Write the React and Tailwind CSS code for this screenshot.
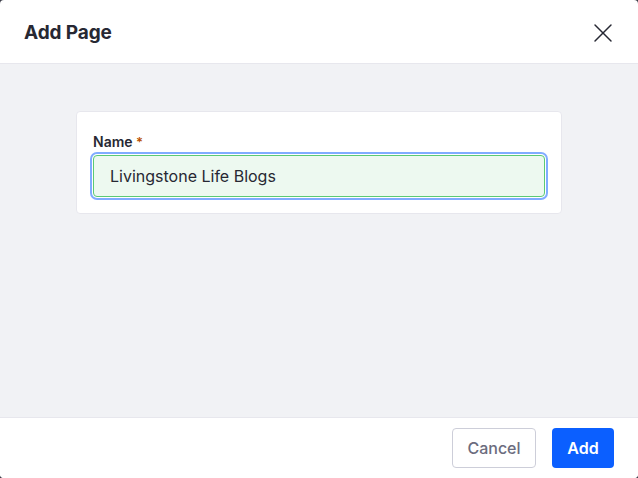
import { X } from 'lucide-react';

export default function App() {
  return (
    <div className="w-[638px] h-[478px] bg-[#3b3c48]" style={{ fontFamily: 'Inter, "Noto Sans", sans-serif' }}>
      <div className="w-full h-full flex flex-col rounded-[4px] overflow-hidden bg-white">
        {/* Header */}
        <div className="h-[64px] shrink-0 flex items-center justify-between pl-6 pr-[19px] border-b border-[#e7e7ed]">
          <h1 className="text-[19px] font-bold text-[#272833] tracking-[-0.1px] pt-[3px]">Add Page</h1>
          <button className="text-[#272833] pt-[2px]">
            <X className="w-[32px] h-[32px]" strokeWidth={1.1} />
          </button>
        </div>

        {/* Body */}
        <div className="flex-1 bg-[#f1f2f5] px-[76px] pt-[47px]">
          <div className="bg-white border border-[#e7e7ed] rounded-[4px] px-4 pt-5 pb-4">
            <label className="block text-[14px] leading-5 font-semibold text-[#272833] mb-[3px]">
              Name <span className="text-[#b95000] text-[13px] align-top">*</span>
            </label>
            <input
              readOnly
              value="Livingstone Life Blogs"
              className="w-full h-[42px] rounded-[4px] border border-[#5aca75] bg-[#edf9f0] px-4 text-[16px] text-[#272833] outline-none shadow-[0_0_0_1px_#ffffff,0_0_0_3px_#80acff]"
            />
          </div>
        </div>

        {/* Footer */}
        <div className="h-[61px] shrink-0 border-t border-[#e7e7ed] bg-white flex items-center justify-end gap-4 pr-6">
          <button className="h-10 w-[84px] rounded-[4px] border border-[#cdced9] bg-white text-[16px] font-medium text-[#6b6c7e]">
            Cancel
          </button>
          <button className="h-10 w-[62px] rounded-[4px] bg-[#0b5fff] text-[16px] font-semibold text-white">
            Add
          </button>
        </div>
      </div>
    </div>
  );
}
